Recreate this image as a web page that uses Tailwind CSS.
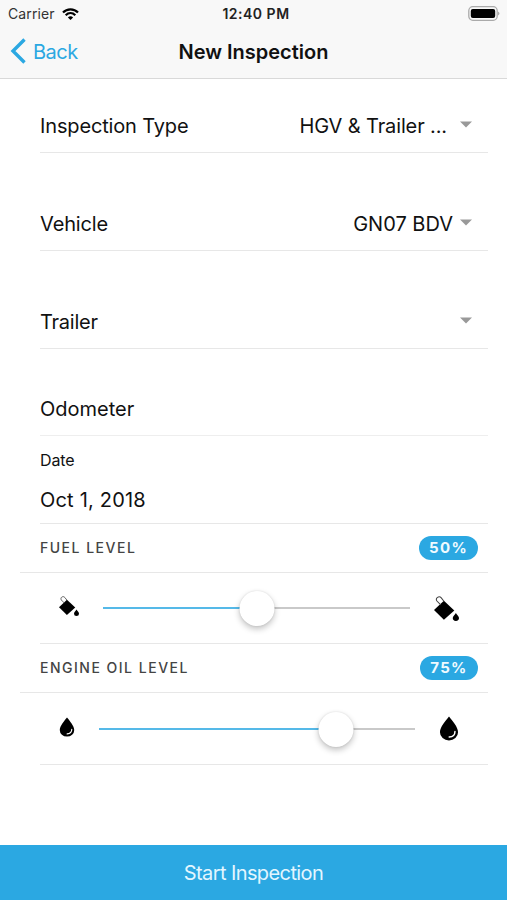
<!DOCTYPE html>
<html lang="en">
<head>
<meta charset="utf-8">
<title>New Inspection</title>
<script src="https://cdn.jsdelivr.net/npm/@tailwindcss/browser@4"></script>
</head>
<body class="bg-white">
<svg class="hidden">
  <symbol id="drop" viewBox="0 0 20 26"><path d="M10 .5C6.500 5 .6 11.500 .6 16.800a9.400 8.700 0 0 0 18.800 0C19.400 11.500 13.500 5 10 .5Z"/><path d="M16.200 16c0 3.500-2.400 5.700-6 5.900" fill="none" stroke="#fff" stroke-width="1.500" stroke-linecap="round"/></symbol>
  <symbol id="bucket" viewBox="0 0 24 24"><path d="M0 13.500 9.500 4.500 19.500 13.800 9.500 22.800Z"/><path d="M6.500 8.500 2.800 4.800C1 2 4.800-.8 7 1.800L9.500 5" fill="none" stroke="#444" stroke-width="1"/><path d="M21 16.200c-.8 1.500-3 3-3 5a3 2.700 0 0 0 6 0c0-2-2.200-3.500-3-5Z"/></symbol>
</svg>
<div class="flex h-[900px] w-[507px] flex-col overflow-hidden bg-white font-['Inter',sans-serif] text-xl text-[#111]">
  <header class="flex h-[79px] flex-col border-b border-[#d9d9d9] bg-[#f8f8f8]">
    <div class="grid h-[27px] grid-cols-3 items-center px-2 text-sm">
      <div class="flex items-center gap-[7px]"><span class="tracking-[0.12px] text-[#333]">Carrier</span>
        <svg class="h-3 w-[17px]" viewBox="0 0 17 12" fill="none" stroke="#000" stroke-width="2.200"><path d="M1 4.500C5 .2 12 .2 16 4.500M3.700 7.300c2.800-2.800 6.800-2.800 9.600 0"/><path d="M8.500 12 5.900 9.400c1.400-1.500 3.800-1.500 5.200 0Z" fill="#000" stroke="none"/></svg>
      </div>
      <span class="whitespace-nowrap pl-[5px] text-center font-semibold tracking-[0.5px] text-[#222]">12:40 PM</span>
      <svg class="-mr-px h-4 w-8 justify-self-end" viewBox="0 0 32 16"><rect x=".8" y=".7" width="28.400" height="13.600" rx="4" fill="none" stroke="#aaa" stroke-width="1.300"/><rect x="2.800" y="3" width="24.400" height="9" rx="2" fill="#000"/><path d="M30 5.500c2 1 2 3 0 4Z" fill="#aaa"/></svg>
    </div>
    <div class="grid h-[50px] grid-cols-3 items-center px-[10px]">
      <div class="flex items-center gap-[7px] text-[#2ba8e2]">
        <svg class="-mt-0.5 h-[26px] w-4" viewBox="0 0 16 26" fill="none" stroke="currentColor" stroke-width="3.400"><path d="M14.500 1.500 3 13l11.500 11.500"/></svg>
        <span class="tracking-[-0.5px]">Back</span>
      </div>
      <span class="whitespace-nowrap text-center font-semibold">New Inspection</span>
    </div>
  </header>
  <main class="flex flex-1 flex-col pl-10 pr-[19px]">
    <div class="flex h-[74px] items-end justify-between border-b border-[#e7e7e7] pb-3 pr-4">
      <span class="tracking-[-0.15px]">Inspection Type</span>
      <div class="flex items-center gap-[13px]"><span class="tracking-[-0.12px]">HGV &amp; Trailer ...</span><svg class="-mt-[3px] h-[7px] w-3 fill-[#999]" viewBox="0 0 12 7"><path d="M0 .5h12l-6 6Z"/></svg></div>
    </div>
    <div class="flex h-[98px] items-end justify-between border-b border-[#e7e7e7] pb-3 pr-4">
      <span class="tracking-[-0.15px]">Vehicle</span>
      <div class="flex items-center gap-[7px]"><span>GN07 BDV</span><svg class="-mt-[3px] h-[7px] w-3 fill-[#999]" viewBox="0 0 12 7"><path d="M0 .5h12l-6 6Z"/></svg></div>
    </div>
    <div class="flex h-[98px] items-end justify-between border-b border-[#e7e7e7] pb-3 pr-4">
      <span class="tracking-[-0.25px]">Trailer</span>
      <div class="flex h-7 items-center"><svg class="-mt-[3px] h-[7px] w-3 fill-[#999]" viewBox="0 0 12 7"><path d="M0 .5h12l-6 6Z"/></svg></div>
    </div>
    <div class="flex h-[87px] items-end border-b border-[#eee] pb-3"><span>Odometer</span></div>
    <div class="flex h-[88px] flex-col justify-between border-b border-[#e7e7e7] pb-[9px] pt-3">
      <span class="text-base leading-6 tracking-[-0.1px]">Date</span>
      <span class="tracking-[0.2px]">Oct 1, 2018</span>
    </div>
    <div class="-ml-5 flex h-[49px] items-center justify-between border-b border-[#e7e7e7] pl-5 pr-[10px] text-sm text-[#444]">
      <span class="font-medium tracking-[1.5px]">FUEL LEVEL</span>
      <span class="flex h-6 w-[59px] items-center justify-center rounded-full bg-[#2ba8e2] text-[15px] font-bold tracking-[1.3px] text-[#effaff]">50%</span>
    </div>
    <div class="flex h-[71px] items-center border-b border-[#e7e7e7] pl-[19px]">
      <svg class="-mt-1 h-5 w-5"><use href="#bucket"/></svg>
      <div class="relative ml-6 h-[2px] w-[307px] bg-[#c9c9c9]"><div class="h-full w-1/2 bg-[#55b9e8]"></div><div class="absolute -top-4 left-1/2 size-[35px] -translate-x-1/2 rounded-full bg-white shadow-[0_3px_6px_rgba(0,0,0,0.24),0_0_2px_rgba(0,0,0,0.12)]"></div></div>
      <svg class="ml-6 h-[25px] w-[25px]"><use href="#bucket"/></svg>
    </div>
    <div class="-ml-5 flex h-[49px] items-center justify-between border-b border-[#e7e7e7] pl-5 pr-[10px] text-sm text-[#444]">
      <span class="font-medium tracking-[1.5px]">ENGINE OIL LEVEL</span>
      <span class="flex h-6 w-[58px] items-center justify-center rounded-full bg-[#2ba8e2] text-[15px] font-bold tracking-[1.3px] text-[#effaff]">75%</span>
    </div>
    <div class="flex h-[72px] items-center border-b border-[#e7e7e7] pl-[19px]">
      <svg class="-mt-1 h-5 w-4"><use href="#drop"/></svg>
      <div class="relative ml-6 h-[2px] w-[316px] bg-[#c9c9c9]"><div class="h-full w-3/4 bg-[#55b9e8]"></div><div class="absolute -top-4 left-3/4 size-[35px] -translate-x-1/2 rounded-full bg-white shadow-[0_3px_6px_rgba(0,0,0,0.24),0_0_2px_rgba(0,0,0,0.12)]"></div></div>
      <svg class="ml-6 h-[25px] w-5"><use href="#drop"/></svg>
    </div>
  </main>
  <button class="flex h-[55px] items-center justify-center bg-[#2ba8e2] pt-px tracking-[-0.6px] text-[#e3f6ff]">Start Inspection</button>
</div>
</body>
</html>
